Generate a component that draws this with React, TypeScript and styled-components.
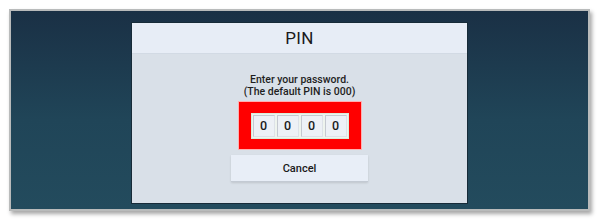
import * as React from "react";
import styled, { createGlobalStyle } from "styled-components";

const GlobalStyle = createGlobalStyle`
  html, body {
    margin: 0;
    padding: 0;
    background: #ffffff;
  }
  body {
    font-family: Roboto, "DejaVu Sans", sans-serif;
  }
`;

const Page = styled.div`
  width: 600px;
  height: 222px;
  box-sizing: border-box;
  padding: 9px 10px 11px 9px;
`;

const Frame = styled.div`
  height: 100%;
  box-sizing: border-box;
  border: 2px solid #b9bbbb;
  box-shadow: 2px 3px 4px rgba(0, 0, 0, 0.35);
  background: linear-gradient(180deg, #1a3045 0%, #204558 55%, #234b5d 100%);
  display: flex;
  justify-content: center;
  padding-top: 11px;
`;

const Dialog = styled.div`
  width: 337px;
  height: 182px;
  box-sizing: border-box;
  border: 1px solid #172b38;
  background: #d9e0e8;
  display: flex;
  flex-direction: column;
`;

const Header = styled.div`
  height: 30px;
  background: #e7edf6;
  border-bottom: 1px solid #d2dae4;
  display: flex;
  align-items: center;
  justify-content: center;
  font-size: 17px;
  color: #1a1a1a;
  letter-spacing: 0.3px;
`;

const Body = styled.div`
  flex: 1;
  display: flex;
  flex-direction: column;
  align-items: center;
  padding-top: 20px;
`;

const Prompt = styled.div`
  font-size: 10.5px;
  font-weight: 500;
  line-height: 11.5px;
  text-align: center;
  color: #1e1e1e;
`;

const Highlight = styled.div`
  margin-top: 4px;
  width: 124px;
  height: 49px;
  box-sizing: border-box;
  background: #ff0000;
  border: 1px solid #ffb0b0;
  display: flex;
  align-items: center;
  justify-content: center;
`;

const Digits = styled.div`
  display: flex;
  gap: 2px;
  padding: 1px;
  background: #eef4ee;
  border: 1px solid #d7eedc;
`;

const Digit = styled.div`
  width: 22px;
  height: 22px;
  box-sizing: border-box;
  background: #edf1f6;
  border: 1px solid #c4c9d0;
  border-right-color: #dde2e8;
  border-bottom-color: #dde2e8;
  display: flex;
  align-items: center;
  justify-content: center;
  font-size: 12.5px;
  font-weight: 500;
  color: #1a1a1a;
`;

const CancelButton = styled.button`
  margin-top: 5px;
  width: 137px;
  height: 27px;
  background: #e8eef7;
  border: none;
  border-bottom: 1px solid #c3cad3;
  box-shadow: 0 1px 2px rgba(0, 0, 0, 0.12);
  font-family: inherit;
  font-size: 11px;
  font-weight: 500;
  color: #1a1a1a;
  padding: 0;
`;

export default function App() {
  const pin = ["0", "0", "0", "0"];
  return (
    <Page>
      <GlobalStyle />
      <Frame>
        <Dialog>
          <Header>PIN</Header>
          <Body>
            <Prompt>
              Enter your password.
              <br />
              (The default PIN is 000)
            </Prompt>
            <Highlight>
              <Digits>
                {pin.map((d, i) => (
                  <Digit key={i}>{d}</Digit>
                ))}
              </Digits>
            </Highlight>
            <CancelButton>Cancel</CancelButton>
          </Body>
        </Dialog>
      </Frame>
    </Page>
  );
}
